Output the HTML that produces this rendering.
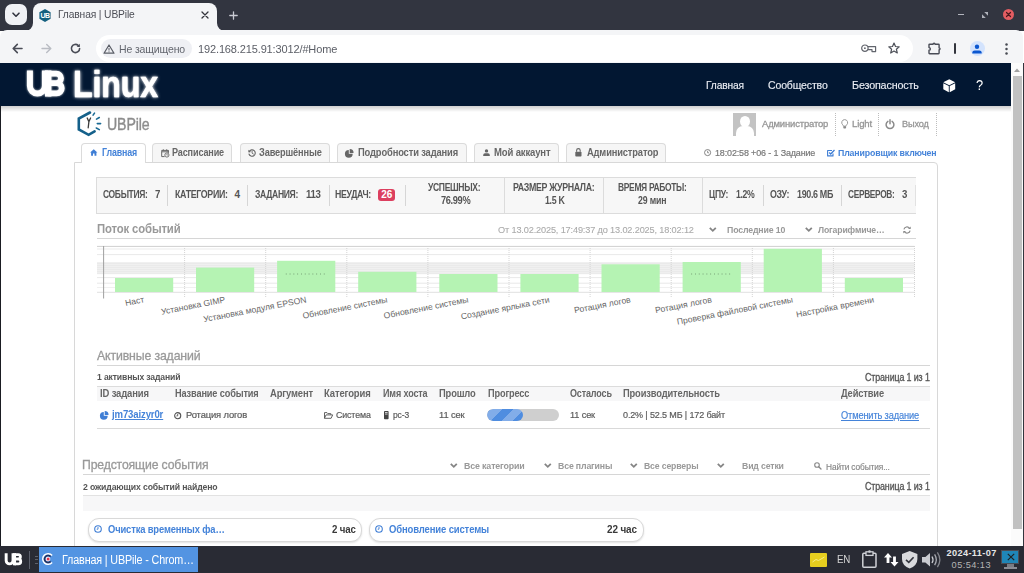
<!DOCTYPE html>
<html><head><meta charset="utf-8"><title>UBPile</title>
<style>
*{box-sizing:border-box;margin:0;padding:0}
html,body{width:1024px;height:573px;overflow:hidden;background:#fff;font-family:"Liberation Sans",sans-serif;}
body{position:relative}
.a{position:absolute}
.t{position:absolute;white-space:nowrap;line-height:1;display:block;transform-origin:0 50%}
svg{position:absolute;overflow:visible}
.tab{position:absolute;top:143px;height:19px;background:#f6f6f6;border:1px solid #dbdbdb;border-bottom:none;border-radius:4px 4px 0 0}
.sep{position:absolute;width:1px;background:#d6d6d6}
.vb{position:absolute;width:1px;background:#dcdcdc;top:177px;height:36px}
.card{position:absolute;top:518px;height:24px;background:#fff;border:1px solid #d9d9d9;border-radius:11px;box-shadow:0 1px 2px rgba(0,0,0,.12)}
</style></head><body>
<!-- chrome tabstrip -->
<div class="a" style="left:0;top:0;width:1024px;height:31px;background:#323540"></div>
<div class="a" style="left:5px;top:4px;width:22px;height:21px;background:#f0f1f5;border-radius:7px"></div>
<svg style="left:12px;top:12px" width="8" height="6" viewBox="0 0 8 6"><path d="M1 1.2 L4 4.2 L7 1.2" fill="none" stroke="#323540" stroke-width="1.6" stroke-linecap="round" stroke-linejoin="round"/></svg>
<!-- toolbar -->
<div class="a" style="left:0;top:30px;width:1023px;height:33px;background:#f4f5f7;border-radius:7px 7px 0 0"></div>
<!-- active tab -->
<div class="a" style="left:33px;top:3px;width:184px;height:28px;background:#f4f5f7;border-radius:8px 8px 0 0"></div>
<svg style="left:25px;top:23px" width="8" height="8" viewBox="0 0 8 8"><path d="M8 0 V8 H0 A8 8 0 0 0 8 0Z" fill="#f4f5f7"/></svg>
<svg style="left:217px;top:23px" width="8" height="8" viewBox="0 0 8 8"><path d="M0 0 V8 H8 A8 8 0 0 1 0 0Z" fill="#f4f5f7"/></svg>
<!-- favicon -->
<svg style="left:39px;top:8.5px" width="12" height="13" viewBox="0 0 12 13"><path d="M6 0 L11.6 3.2 V9.8 L6 13 L0.4 9.8 V3.2Z" fill="#15607f"/><text x="6" y="9.1" font-size="7" font-weight="bold" fill="#fff" text-anchor="middle" font-family="Liberation Sans" letter-spacing="-0.6">UB</text></svg>
<!-- tab close / plus -->
<svg style="left:200.5px;top:11px" width="8" height="8" viewBox="0 0 8 8"><path d="M1 1 L7 7 M7 1 L1 7" stroke="#33353d" stroke-width="1.3" stroke-linecap="round"/></svg>
<svg style="left:229px;top:10.5px" width="9" height="9" viewBox="0 0 9 9"><path d="M4.5 0.8 V8.2 M0.8 4.5 H8.2" stroke="#c9cbd3" stroke-width="1.3" stroke-linecap="round"/></svg>
<!-- window controls -->
<div class="a" style="left:957.5px;top:13.6px;width:6px;height:1.6px;background:#b3b5be"></div>
<svg style="left:981.5px;top:11.5px" width="6" height="6" viewBox="0 0 6 6"><path d="M2.2 0 H6 V3.8Z M0 2.2 V6 H3.8Z" fill="#aeb0b9"/></svg>
<div class="a" style="left:1002.5px;top:8.5px;width:11.5px;height:11.5px;border-radius:50%;background:#e35d62"></div>
<svg style="left:1005.7px;top:11.7px" width="5" height="5" viewBox="0 0 5 5"><path d="M0.5 0.5 L4.5 4.5 M4.5 0.5 L0.5 4.5" stroke="#4a1a1e" stroke-width="1.2" stroke-linecap="round"/></svg>
<!-- nav buttons -->
<svg style="left:12px;top:43px" width="11" height="11" viewBox="0 0 11 11"><path d="M10 5.5 H1.5 M5.3 1.4 L1.2 5.5 L5.3 9.6" fill="none" stroke="#4a4d57" stroke-width="1.6" stroke-linecap="round" stroke-linejoin="round"/></svg>
<svg style="left:41px;top:43px" width="11" height="11" viewBox="0 0 11 11"><path d="M1 5.5 H9.5 M5.7 1.4 L9.8 5.5 L5.7 9.6" fill="none" stroke="#b9bcc3" stroke-width="1.4" stroke-linecap="round" stroke-linejoin="round"/></svg>
<svg style="left:69.5px;top:43px" width="11" height="11" viewBox="0 0 11 11"><path d="M9.6 5.5 A4.1 4.1 0 1 1 8.2 2.4" fill="none" stroke="#4a4d57" stroke-width="1.6" stroke-linecap="round"/><path d="M9.9 0.8 V4 H6.7Z" fill="#4a4d57"/></svg>
<!-- omnibox -->
<div class="a" style="left:96px;top:35px;width:817px;height:26.5px;background:#fff;border-radius:13.5px"></div>
<div class="a" style="left:100.5px;top:39px;width:91px;height:19px;background:#eff0f4;border-radius:9.5px"></div>
<svg style="left:103.3px;top:43.6px" width="12" height="10" viewBox="0 0 12 10"><path d="M6 1 L11 9.2 H1Z" fill="none" stroke="#5a5d66" stroke-width="1.2" stroke-linejoin="round"/><path d="M6 4 V6.5" stroke="#5a5d66" stroke-width="1"/><circle cx="6" cy="7.8" r="0.55" fill="#5a5d66"/></svg>
<!-- key, star -->
<svg style="left:861px;top:44.4px" width="15.5" height="9" viewBox="0 0 15.5 9"><circle cx="3.9" cy="4.2" r="3.2" fill="none" stroke="#62656d" stroke-width="1.2"/><circle cx="3.9" cy="4.2" r="0.9" fill="#62656d"/><path d="M7 2.7 H14.6 V7.6 H11 V5.7 H7" fill="none" stroke="#62656d" stroke-width="1.2" stroke-linejoin="round"/></svg>
<svg style="left:888px;top:42.3px" width="12" height="12" viewBox="0 0 12 12"><path d="M6 1 L7.5 4.5 L11.2 4.8 L8.4 7.3 L9.3 11 L6 9 L2.7 11 L3.6 7.3 L0.8 4.8 L4.5 4.5Z" fill="none" stroke="#4d5058" stroke-width="1.2" stroke-linejoin="round"/></svg>
<!-- extensions, bar, profile, menu -->
<svg style="left:927.8px;top:41.6px" width="13.5" height="12.5" viewBox="0 0 13.5 12.5"><path d="M1.6 2.2 H5.1 A0.95 0.95 0 0 1 7 2.2 H10.5 Q11.1 2.2 11.1 2.8 V5.9 A0.95 0.95 0 0 1 11.1 7.8 V11.1 Q11.1 11.7 10.5 11.7 H1.6 Q1 11.7 1 11.1 V8.3 A1.35 1.35 0 0 0 1 5.6 V2.8 Q1 2.2 1.6 2.2Z" fill="none" stroke="#4a4d57" stroke-width="1.4" stroke-linejoin="round"/></svg>
<div class="a" style="left:954.4px;top:42.6px;width:2px;height:11.8px;background:#33353d;border-radius:1px"></div>
<div class="a" style="left:969.5px;top:41px;width:15.2px;height:15.2px;border-radius:50%;background:#d3e3fd"></div>
<svg style="left:972.3px;top:43.5px" width="10" height="10" viewBox="0 0 10 10"><circle cx="5" cy="2.8" r="2.2" fill="#0b57d0"/><path d="M0.3 9.3 A2.6 2.6 0 0 1 2.9 6.4 H7.1 A2.6 2.6 0 0 1 9.7 9.3 V9.6 H0.3Z" fill="#0b57d0"/></svg>
<svg style="left:1004.5px;top:42.5px" width="3" height="12" viewBox="0 0 3 12"><circle cx="1.5" cy="1.5" r="1.25" fill="#474a52"/><circle cx="1.5" cy="6" r="1.25" fill="#474a52"/><circle cx="1.5" cy="10.5" r="1.25" fill="#474a52"/></svg>

<!-- page scrollbar -->
<div class="a" style="left:1011px;top:63px;width:11.5px;height:483px;background:#fbfbfb"></div>
<div class="a" style="left:1022.5px;top:63px;width:1.5px;height:483px;background:#33353d"></div>
<div class="a" style="left:1013px;top:75.5px;width:8.7px;height:453.5px;background:#c1c1c1"></div>
<svg style="left:1014.3px;top:67.5px" width="6" height="4" viewBox="0 0 6 4"><path d="M0 4 L3 0.5 L6 4Z" fill="#a0a0a0"/></svg>
<!-- left window edge -->
<div class="a" style="left:0;top:63px;width:1px;height:483px;background:#1a1c22"></div>

<!-- site nav -->
<div class="a" style="left:1px;top:106px;width:1010px;height:6px;background:linear-gradient(rgba(0,0,0,.19),rgba(0,0,0,0))"></div>
<div class="a" style="left:0;top:63px;width:1011px;height:43px;background:#021732"></div>
<svg style="left:0;top:0;filter:drop-shadow(0 0 1.2px rgba(255,255,255,.75))" width="80" height="110" viewBox="0 0 80 110"><path d="M29.9 70.4 V86 A7.5 7.5 0 0 0 44.9 86 V70.4" fill="none" stroke="#fff" stroke-width="6"/><path d="M48.2 70.4 V96.6" fill="none" stroke="#fff" stroke-width="6.4"/><path d="M48.2 73.6 H56.3 A4.75 4.75 0 0 1 56.3 83.1 H48.2 M48.2 83.1 H56.6 A5.15 5.15 0 0 1 56.6 93.4 H48.2" fill="none" stroke="#fff" stroke-width="5.8"/></svg>
<!-- cube icon -->
<svg style="left:942.5px;top:78.5px" width="12.5" height="13.5" viewBox="0 0 12.5 13.5"><path d="M6.25 0.3 L12.2 3.3 L6.25 6.3 L0.3 3.3Z" fill="#fff"/><path d="M0.3 4.2 L5.8 7 V13.2 L0.3 10.2Z" fill="#fff"/><path d="M12.2 4.2 L6.7 7 V13.2 L12.2 10.2Z" fill="#fff"/></svg>

<!-- UBPile logo -->
<svg style="left:77px;top:111px" width="25" height="26" viewBox="0 0 25 26"><path d="M13 1.5 L1.8 7.6 V18.4 L11.6 23.8 L17.6 20.3" fill="none" stroke="#14608a" stroke-width="2.6" stroke-linejoin="miter" stroke-linecap="round"/><path d="M10.2 7 L11.9 10.6 L13.6 7 M11.9 10.6 L11.2 16.8" fill="none" stroke="#3c3c3c" stroke-width="1.3" stroke-linecap="round" stroke-linejoin="round"/><path d="M16.1 4.1 L17.5 2.1 M19.5 8.1 L22.3 6.5 M20.3 12.6 L23.6 12.6 M19.3 17 L22.3 18.6" stroke="#1a6a94" stroke-width="1.6" stroke-linecap="round"/></svg>

<!-- header right -->
<div class="a" style="left:733px;top:112.5px;width:23px;height:23.3px;background:#c3c3c3;overflow:hidden"><div class="a" style="left:6.5px;top:3.5px;width:10px;height:11px;border-radius:50%;background:#fff"></div><div class="a" style="left:2.5px;top:13px;width:18px;height:16px;border-radius:7px 7px 0 0;background:#fff"></div></div>
<div class="a" style="left:835.2px;top:112.5px;height:23px;width:0;border-left:1px dotted #bdbdbd"></div>
<div class="a" style="left:878px;top:112.5px;height:23px;width:0;border-left:1px dotted #bdbdbd"></div>
<div class="a" style="left:936.2px;top:112.5px;height:23px;width:0;border-left:1px dotted #bdbdbd"></div>
<svg style="left:841px;top:119.3px" width="7.4" height="10" viewBox="0 0 7.4 10"><path d="M3.7 0.6 A3 3 0 0 1 5.7 5.8 Q5.1 6.4 5.1 7.2 H2.3 Q2.3 6.4 1.7 5.8 A3 3 0 0 1 3.7 0.6Z" fill="none" stroke="#999" stroke-width="1"/><rect x="2.3" y="7.3" width="2.8" height="2.2" rx="0.8" fill="#8a8a8a"/></svg>
<svg style="left:885px;top:119px" width="10" height="10" viewBox="0 0 10 10"><path d="M2.9 2.3 A3.9 3.9 0 1 0 7.1 2.3" fill="none" stroke="#8a8a8a" stroke-width="1.5" stroke-linecap="round"/><path d="M5 0.7 V4.8" stroke="#8a8a8a" stroke-width="1.5" stroke-linecap="round"/></svg>

<!-- main panel -->
<div class="a" style="left:74px;top:161.5px;width:864px;height:400px;border:1px solid #d8d8d8;border-radius:0 4px 0 0;background:#fff"></div>
<!-- tabs -->
<div class="tab" style="left:80.6px;width:65px;background:#fff;height:20px"></div>
<div class="tab" style="left:151.8px;width:80.7px"></div>
<div class="tab" style="left:239.8px;width:90.2px"></div>
<div class="tab" style="left:336.8px;width:129.8px"></div>
<div class="tab" style="left:473.5px;width:85.5px"></div>
<div class="tab" style="left:566px;width:100px"></div>
<!-- tab icons -->
<svg style="left:90px;top:149px" width="7.5" height="7" viewBox="0 0 7.5 7"><path d="M3.75 0.2 L7.4 3.5 H6.4 V6.8 H4.5 V4.6 H3 V6.8 H1.1 V3.5 H0.1Z" fill="#3f7ed5"/></svg>
<svg style="left:161px;top:148.5px" width="8.5" height="8.5" viewBox="0 0 8.5 8.5"><path d="M0.7 1.4 H7.3 V4 M7.3 1.4 V2.8 H0.7 V1.4 M0.7 2.8 V7.6 H3.6" fill="none" stroke="#666" stroke-width="1"/><path d="M2.3 0.3 V1.8 M5.7 0.3 V1.8" stroke="#666" stroke-width="1"/><circle cx="5.9" cy="6" r="2.1" fill="none" stroke="#666" stroke-width="0.9"/><path d="M5.9 4.9 V6.1 H6.8" fill="none" stroke="#666" stroke-width="0.7"/></svg>
<svg style="left:247.8px;top:148.8px" width="8" height="8" viewBox="0 0 8 8"><path d="M1.2 2.6 A3.2 3.2 0 1 1 1 5" fill="none" stroke="#666" stroke-width="1.1" stroke-linecap="round"/><path d="M0.2 0.8 L0.6 3.4 L3.1 2.9Z" fill="#666"/><path d="M4.1 2.4 V4.2 L5.4 5" fill="none" stroke="#666" stroke-width="0.9" stroke-linecap="round"/></svg>
<svg style="left:345.3px;top:148.6px" width="8.6" height="8.6" viewBox="0 0 8.6 8.6"><path d="M3.8 0.9 V4.8 H7.7 A3.9 3.9 0 1 1 3.8 0.9Z" fill="#666"/><path d="M4.7 0 A3.9 3.9 0 0 1 8.6 3.9 H4.7Z" fill="#666"/></svg>
<svg style="left:483px;top:149.3px" width="7" height="7" viewBox="0 0 7 7"><circle cx="3.5" cy="1.9" r="1.7" fill="#666"/><path d="M0.2 6.9 V6 A1.8 1.8 0 0 1 2 4.3 H5 A1.8 1.8 0 0 1 6.8 6 V6.9Z" fill="#666"/></svg>
<svg style="left:575.3px;top:148.3px" width="6.8" height="8.6" viewBox="0 0 6.8 8.6"><path d="M1.6 3.8 V2.4 A1.8 1.8 0 0 1 5.2 2.4 V3.8" fill="none" stroke="#666" stroke-width="1.1"/><rect x="0.3" y="3.7" width="6.2" height="4.7" rx="0.7" fill="#666"/></svg>
<svg style="left:704.2px;top:149.2px" width="7.2" height="7.2" viewBox="0 0 7.2 7.2"><circle cx="3.6" cy="3.6" r="3.05" fill="none" stroke="#777" stroke-width="0.9"/><path d="M3.6 1.8 V3.8 H5" fill="none" stroke="#777" stroke-width="0.8"/></svg>
<svg style="left:827.2px;top:148.8px" width="8" height="7.6" viewBox="0 0 8 7.6"><path d="M6 4.6 V6.9 H0.6 V1.5 H5" fill="none" stroke="#3f7ed5" stroke-width="1.1" stroke-linejoin="round"/><path d="M2.2 3.5 L3.7 5 L7.5 1" fill="none" stroke="#3f7ed5" stroke-width="1.3"/></svg>

<!-- stats bar -->
<div class="a" style="left:96px;top:176.5px;width:819.5px;height:37px;background:#f7f7f7;border:1px solid #dcdcdc;border-right:none"></div>
<div class="sep" style="left:167.3px;top:185px;height:20.5px"></div>
<div class="sep" style="left:247.4px;top:185px;height:20.5px"></div>
<div class="sep" style="left:328.5px;top:185px;height:20.5px"></div>
<div class="sep" style="left:405.3px;top:185px;height:20.5px"></div>
<div class="vb" style="left:504.3px"></div>
<div class="vb" style="left:603px"></div>
<div class="vb" style="left:702px"></div>
<div class="sep" style="left:763px;top:185px;height:20.5px"></div>
<div class="sep" style="left:841px;top:185px;height:20.5px"></div>
<div class="sep" style="left:914.5px;top:185px;height:20.5px;background:#e2e2e2"></div>
<div class="a" style="left:378px;top:188.6px;width:17.2px;height:12.6px;background:#dc3f5f;border-radius:3px"></div>

<!-- section 1 header -->
<div class="a" style="left:97px;top:237.7px;width:818.5px;height:1px;background:#d6d6d6"></div>
<svg style="left:708.7px;top:226.8px" width="7.6" height="5" viewBox="0 0 7.6 5"><path d="M0.8 0.8 L3.8 3.8 L6.8 0.8" fill="none" stroke="#858585" stroke-width="1.8"/></svg>
<svg style="left:805px;top:226.8px" width="7.6" height="5" viewBox="0 0 7.6 5"><path d="M0.8 0.8 L3.8 3.8 L6.8 0.8" fill="none" stroke="#858585" stroke-width="1.8"/></svg>
<svg style="left:903px;top:225.5px" width="8" height="8" viewBox="0 0 8 8"><path d="M0.9 3.4 A3.1 3.1 0 0 1 6.5 2.2 M7.1 4.6 A3.1 3.1 0 0 1 1.5 5.8" fill="none" stroke="#888" stroke-width="1.1"/><path d="M7.7 0.4 V3.1 H5Z M0.3 7.6 V4.9 H3Z" fill="#888"/></svg>

<svg style="left:0;top:0" width="1024" height="573" viewBox="0 0 1024 573">
<rect x="97.0" y="262" width="817.5" height="12.2" fill="#f0f0f0"/>
<rect x="97.0" y="263.1" width="817.5" height="0.8" fill="#e9e9e9"/>
<rect x="97.0" y="265.1" width="817.5" height="0.8" fill="#e9e9e9"/>
<rect x="97.0" y="267.1" width="817.5" height="0.8" fill="#e9e9e9"/>
<rect x="97.0" y="269.1" width="817.5" height="0.8" fill="#e9e9e9"/>
<rect x="97.0" y="271.1" width="817.5" height="0.8" fill="#e9e9e9"/>
<rect x="97.0" y="272.90000000000003" width="817.5" height="0.8" fill="#e9e9e9"/>
<rect x="97.0" y="245.9" width="817.5" height="1" fill="#d0d0d0"/>
<rect x="97.0" y="248.5" width="817.5" height="1" fill="#ececec"/>
<rect x="97.0" y="254.1" width="817.5" height="1" fill="#e9e9e9"/>
<rect x="97.0" y="277.1" width="817.5" height="1" fill="#e9e9e9"/>
<rect x="97.0" y="282.7" width="817.5" height="1" fill="#e9e9e9"/>
<rect x="97.0" y="287.0" width="817.5" height="1" fill="#f0f0f0"/>
<rect x="97.0" y="291.8" width="817.5" height="1" fill="#e0e0e0"/>
<line x1="184.6" y1="246" x2="184.6" y2="298" stroke="#d4d4d4" stroke-width="1" stroke-dasharray="1 1"/>
<line x1="265.7" y1="246" x2="265.7" y2="298" stroke="#d4d4d4" stroke-width="1" stroke-dasharray="1 1"/>
<line x1="346.8" y1="246" x2="346.8" y2="298" stroke="#d4d4d4" stroke-width="1" stroke-dasharray="1 1"/>
<line x1="427.9" y1="246" x2="427.9" y2="298" stroke="#d4d4d4" stroke-width="1" stroke-dasharray="1 1"/>
<line x1="509.0" y1="246" x2="509.0" y2="298" stroke="#d4d4d4" stroke-width="1" stroke-dasharray="1 1"/>
<line x1="590.1" y1="246" x2="590.1" y2="298" stroke="#d4d4d4" stroke-width="1" stroke-dasharray="1 1"/>
<line x1="671.2" y1="246" x2="671.2" y2="298" stroke="#d4d4d4" stroke-width="1" stroke-dasharray="1 1"/>
<line x1="752.3" y1="246" x2="752.3" y2="298" stroke="#d4d4d4" stroke-width="1" stroke-dasharray="1 1"/>
<line x1="833.4" y1="246" x2="833.4" y2="298" stroke="#d4d4d4" stroke-width="1" stroke-dasharray="1 1"/>
<line x1="914.5" y1="246" x2="914.5" y2="298" stroke="#d4d4d4" stroke-width="1" stroke-dasharray="1 1"/>
<rect x="103.1" y="246" width="1" height="52.5" fill="#a0a0a0"/>
<rect x="115.0" y="278" width="58.2" height="14.0" fill="#b5f3b3"/>
<text x="144.6" y="302.3" font-size="8.6" fill="#666" text-anchor="end" font-family="Liberation Sans" transform="rotate(-11 144.6 302.3)">Наст</text>
<rect x="196.0" y="267.6" width="58.2" height="24.4" fill="#b5f3b3"/>
<text x="225.6" y="302.3" font-size="8.6" fill="#666" text-anchor="end" font-family="Liberation Sans" transform="rotate(-11 225.6 302.3)">Установка GIMP</text>
<rect x="277.1" y="260.8" width="58.2" height="31.2" fill="#b5f3b3"/>
<text x="306.8" y="302.3" font-size="8.6" fill="#666" text-anchor="end" font-family="Liberation Sans" transform="rotate(-11 306.8 302.3)">Установка модуля EPSON</text>
<rect x="358.2" y="271.8" width="58.2" height="20.2" fill="#b5f3b3"/>
<text x="387.8" y="302.3" font-size="8.6" fill="#666" text-anchor="end" font-family="Liberation Sans" transform="rotate(-11 387.8 302.3)">Обновление системы</text>
<rect x="439.3" y="274" width="58.2" height="18.0" fill="#b5f3b3"/>
<text x="468.9" y="302.3" font-size="8.6" fill="#666" text-anchor="end" font-family="Liberation Sans" transform="rotate(-11 468.9 302.3)">Обновление системы</text>
<rect x="520.4" y="274" width="58.2" height="18.0" fill="#b5f3b3"/>
<text x="550.0" y="302.3" font-size="8.6" fill="#666" text-anchor="end" font-family="Liberation Sans" transform="rotate(-11 550.0 302.3)">Создание ярлыка сети</text>
<rect x="601.5" y="264.3" width="58.2" height="27.7" fill="#b5f3b3"/>
<text x="631.1" y="302.3" font-size="8.6" fill="#666" text-anchor="end" font-family="Liberation Sans" transform="rotate(-11 631.1 302.3)">Ротация логов</text>
<rect x="682.6" y="262" width="58.2" height="30.0" fill="#b5f3b3"/>
<text x="712.2" y="302.3" font-size="8.6" fill="#666" text-anchor="end" font-family="Liberation Sans" transform="rotate(-11 712.2 302.3)">Ротация логов</text>
<rect x="763.7" y="248.8" width="58.2" height="43.2" fill="#b5f3b3"/>
<text x="793.3" y="302.3" font-size="8.6" fill="#666" text-anchor="end" font-family="Liberation Sans" transform="rotate(-11 793.3 302.3)">Проверка файловой системы</text>
<rect x="844.8" y="278" width="58.2" height="14.0" fill="#b5f3b3"/>
<text x="874.4" y="302.3" font-size="8.6" fill="#666" text-anchor="end" font-family="Liberation Sans" transform="rotate(-11 874.4 302.3)">Настройка времени</text>
<line x1="285.8" y1="274" x2="327.2" y2="274" stroke="#6a8f6a" stroke-width="0.9" stroke-dasharray="0.9 2.9"/>
<line x1="691.2" y1="274" x2="732.8" y2="274" stroke="#6a8f6a" stroke-width="0.9" stroke-dasharray="0.9 2.9"/>
</svg>

<!-- section 2 -->
<div class="a" style="left:97px;top:364.7px;width:832.5px;height:1px;background:#d6d6d6"></div>
<div class="a" style="left:97px;top:385.7px;width:832.5px;height:15.5px;background:#f7f7f8;border-top:1px solid #dcdcdc"></div>
<div class="a" style="left:97px;top:427.6px;width:832.5px;height:1px;background:#d9d9d9"></div>
<svg style="left:100px;top:410.8px" width="8.6" height="8.6" viewBox="0 0 8.6 8.6"><path d="M3.8 0.9 V4.8 H7.7 A3.9 3.9 0 1 1 3.8 0.9Z" fill="#3f7ed5"/><path d="M4.7 0 A3.9 3.9 0 0 1 8.6 3.9 H4.7Z" fill="#3f7ed5"/></svg>
<svg style="left:174px;top:411.5px" width="7.4" height="7.4" viewBox="0 0 7.4 7.4"><circle cx="3.7" cy="3.7" r="3.05" fill="none" stroke="#555" stroke-width="1.1"/><path d="M3.7 1.9 V3.9 H2.4" fill="none" stroke="#555" stroke-width="0.9"/></svg>
<svg style="left:323.7px;top:411.6px" width="9" height="7" viewBox="0 0 9 7"><path d="M0.5 6.3 V0.6 H3 L3.8 1.6 H6.8 V2.8 M0.5 6.3 L2 2.9 H8.7 L7.1 6.3Z" fill="none" stroke="#555" stroke-width="0.9" stroke-linejoin="round"/></svg>
<svg style="left:383.8px;top:410.8px" width="4.6" height="8.2" viewBox="0 0 4.6 8.2"><rect x="0" y="0" width="4.6" height="8.2" rx="0.8" fill="#444"/><rect x="1" y="1" width="2.6" height="0.9" fill="#ddd"/><rect x="1" y="2.6" width="2.6" height="0.9" fill="#ddd"/></svg>
<!-- progress -->
<div class="a" style="left:487px;top:408.7px;width:72px;height:12.6px;border-radius:6.3px;background:#cfcfcf;overflow:hidden"><div class="a" style="left:0;top:0;width:36px;height:12.6px;border-radius:6.3px;background:repeating-linear-gradient(135deg,#4f8de0 0,#4f8de0 3px,#82ade9 3px,#82ade9 11px,#4f8de0 11px,#4f8de0 15.6px)"></div></div>

<!-- section 3 -->
<div class="a" style="left:82.5px;top:473.7px;width:847px;height:1px;background:#d6d6d6"></div>
<div class="a" style="left:82.5px;top:495px;width:847px;height:15.7px;background:#f7f7f8;border-top:1px solid #e2e2e2"></div>
<svg style="left:450px;top:463.2px" width="7.6" height="5" viewBox="0 0 7.6 5"><path d="M0.8 0.8 L3.8 3.8 L6.8 0.8" fill="none" stroke="#858585" stroke-width="1.8"/></svg>
<svg style="left:543.7px;top:463.2px" width="7.6" height="5" viewBox="0 0 7.6 5"><path d="M0.8 0.8 L3.8 3.8 L6.8 0.8" fill="none" stroke="#858585" stroke-width="1.8"/></svg>
<svg style="left:630px;top:463.2px" width="7.6" height="5" viewBox="0 0 7.6 5"><path d="M0.8 0.8 L3.8 3.8 L6.8 0.8" fill="none" stroke="#858585" stroke-width="1.8"/></svg>
<svg style="left:716.7px;top:463.2px" width="7.6" height="5" viewBox="0 0 7.6 5"><path d="M0.8 0.8 L3.8 3.8 L6.8 0.8" fill="none" stroke="#858585" stroke-width="1.8"/></svg>
<svg style="left:813.7px;top:462px" width="7.5" height="7.5" viewBox="0 0 7.5 7.5"><circle cx="3" cy="3" r="2.3" fill="none" stroke="#888" stroke-width="1.1"/><path d="M4.7 4.7 L7 7" stroke="#888" stroke-width="1.3" stroke-linecap="round"/></svg>
<div class="card" style="left:88px;width:273.5px"></div>
<div class="card" style="left:368.7px;width:275.3px"></div>
<svg style="left:94px;top:525.3px" width="8" height="8" viewBox="0 0 8 8"><circle cx="4" cy="4" r="3.3" fill="none" stroke="#3f7ed5" stroke-width="1.1"/><path d="M4 2 V4.2 H2.7" fill="none" stroke="#3f7ed5" stroke-width="0.9"/></svg>
<svg style="left:375.3px;top:525.3px" width="8" height="8" viewBox="0 0 8 8"><circle cx="4" cy="4" r="3.3" fill="none" stroke="#3f7ed5" stroke-width="1.1"/><path d="M4 2 V4.2 H2.7" fill="none" stroke="#3f7ed5" stroke-width="0.9"/></svg>

<!-- taskbar -->
<div class="a" style="left:0;top:546px;width:1024px;height:27px;background:#292b34"></div>
<div class="a" style="left:38.8px;top:546.7px;width:159.5px;height:25.3px;background:#5394e2"></div>
<svg style="left:0;top:0" width="40" height="573" viewBox="0 0 40 573"><g transform="translate(-7.5 520.5) scale(0.457 0.464)"><path d="M29.9 70.4 V86 A7.5 7.5 0 0 0 44.9 86 V70.4" fill="none" stroke="#fff" stroke-width="6.4"/><path d="M48.2 70.4 V96.6" fill="none" stroke="#fff" stroke-width="6.6"/><path d="M48.2 73.6 H56.3 A4.75 4.75 0 0 1 56.3 83.1 H48.2 M48.2 83.1 H56.6 A5.15 5.15 0 0 1 56.6 93.4 H48.2" fill="none" stroke="#fff" stroke-width="6.2"/></g></svg>
<div class="a" style="left:29px;top:550.5px;width:1px;height:18.5px;background:#5d616d"></div>
<div class="a" style="left:34.5px;top:555.5px;width:3px;height:1px;background:#5f626c"></div>
<div class="a" style="left:34.5px;top:559px;width:3px;height:1px;background:#5f626c"></div>
<div class="a" style="left:34.5px;top:562.5px;width:3px;height:1px;background:#5f626c"></div>
<svg style="left:42px;top:553.3px" width="12" height="12" viewBox="0 0 12 12"><path d="M10.1 2.6 A5.3 5.3 0 1 0 10.1 9.4" fill="none" stroke="#fff" stroke-width="1.5"/><path d="M8.6 3.6 A3.5 3.5 0 1 0 8.6 8.4" fill="none" stroke="#27305a" stroke-width="1.6"/><circle cx="6" cy="6" r="2.3" fill="#fff"/><circle cx="6.1" cy="6" r="1.5" fill="#e8324a"/></svg>
<!-- tray -->
<div class="a" style="left:810.3px;top:552.5px;width:16.4px;height:14px;background:#e6ce1f;border-radius:1px"></div>
<svg style="left:812px;top:556px" width="13" height="7" viewBox="0 0 13 7"><path d="M0.5 6 L4 3.5 L6.5 4.5 L12.5 1" fill="none" stroke="#f6ec8a" stroke-width="1"/></svg>
<svg style="left:862px;top:550px" width="15" height="18" viewBox="0 0 15 18"><rect x="0.8" y="3.2" width="13.2" height="14" rx="1" fill="none" stroke="#cfd1d6" stroke-width="1.5"/><rect x="4" y="1.8" width="7" height="3.6" fill="#292b34" stroke="#cfd1d6" stroke-width="1.3"/><circle cx="7.5" cy="1.5" r="1.3" fill="#cfd1d6"/></svg>
<svg style="left:883.5px;top:553px" width="14.5" height="13.5" viewBox="0 0 14.5 13.5"><path d="M4 0 L8 4.6 H5.4 V10 H2.6 V4.6 H0Z" fill="#fff"/><path d="M10.5 13.5 L14.5 8.9 H11.9 V3.5 H9.1 V8.9 H6.5Z" fill="#fff"/></svg>
<svg style="left:902.3px;top:550.5px" width="15.4" height="17.6" viewBox="0 0 15.4 17.6"><path d="M7.7 0 L15.4 3 V8 Q15.4 14.5 7.7 17.6 Q0 14.5 0 8 V3Z" fill="#d9dadd"/><path d="M4 8.8 L6.8 11.4 L11.6 6.2" fill="none" stroke="#33353d" stroke-width="1.6"/></svg>
<svg style="left:922.3px;top:550.5px" width="19.5" height="17.5" viewBox="0 0 19.5 17.5"><path d="M0 6 H3.4 L8 2 V15.5 L3.4 11.5 H0Z" fill="#c9cbd0"/><path d="M10 5.5 Q12 8.75 10 12" fill="none" stroke="#c9cbd0" stroke-width="1.3"/><path d="M12.6 3.4 Q16 8.75 12.6 14.1" fill="none" stroke="#a9abb2" stroke-width="1.3"/><path d="M15.4 1.4 Q20.3 8.75 15.4 16.1" fill="none" stroke="#83858c" stroke-width="1.3"/></svg>
<div class="a" style="left:1000.8px;top:549.5px;width:18.7px;height:14.5px;background:#1f86b8;border:1.5px solid #4a4d56"></div>
<svg style="left:1006.5px;top:553px" width="8" height="8" viewBox="0 0 8 8"><path d="M0.8 0.8 L7.2 7.2 M7.2 0.8 L0.8 7.2" stroke="#222" stroke-width="1.2"/></svg>
<div class="a" style="left:1007px;top:564px;width:6.5px;height:3px;background:#7a7c84"></div>
<div class="a" style="left:1004px;top:567px;width:12.5px;height:2px;background:#8a8c94"></div>

<span class="t" id="t0" style="left:57.80px;top:9.41px;font-size:11.4px;color:#4c4e56;letter-spacing:-0.150px;transform:scaleX(0.9016);">Главная | UBPile</span>
<span class="t" id="t1" style="left:119.00px;top:43.81px;font-size:11.2px;color:#63666e;letter-spacing:-0.150px;transform:scaleX(0.9392);">Не защищено</span>
<span class="t" id="t2" style="left:197.80px;top:43.80px;font-size:11.8px;color:#5b5e66;letter-spacing:-0.150px;transform:scaleX(0.9336);">192.168.215.91:3012/#Home</span>
<span class="t" id="t3" style="left:73.20px;top:66.51px;font-size:36px;color:#fff;letter-spacing:-0.150px;transform:scaleX(0.8924);font-weight:bold;text-shadow:0 0 2px #fff,0 0 4px rgba(255,255,255,.75),0 0 6px rgba(255,255,255,.3);-webkit-text-stroke:0.5px #fff;">Linux</span>
<span class="t" id="t4" style="left:706.00px;top:79.81px;font-size:11px;color:#e9ecf3;letter-spacing:-0.150px;transform:scaleX(0.9308);-webkit-text-stroke:0.15px #e9ecf3;">Главная</span>
<span class="t" id="t5" style="left:768.40px;top:79.81px;font-size:11px;color:#e9ecf3;letter-spacing:-0.150px;transform:scaleX(0.9550);-webkit-text-stroke:0.15px #e9ecf3;">Сообщество</span>
<span class="t" id="t6" style="left:852.30px;top:79.81px;font-size:11px;color:#e9ecf3;letter-spacing:-0.150px;transform:scaleX(0.9755);-webkit-text-stroke:0.15px #e9ecf3;">Безопасность</span>
<span class="t" id="t7" style="left:976.00px;top:78.02px;font-size:14.5px;color:#ffffff;letter-spacing:-0.150px;transform:scaleX(0.8829);">?</span>
<span class="t" id="t8" style="left:107.00px;top:116.51px;font-size:15.8px;color:#8c8c8c;letter-spacing:-0.150px;transform:scaleX(0.8967);-webkit-text-stroke:0.35px #8c8c8c;">UBPile</span>
<span class="t" id="t9" style="left:761.80px;top:119.41px;font-size:9.8px;color:#959595;letter-spacing:-0.150px;transform:scaleX(0.9631);-webkit-text-stroke:0.3px #959595;">Администратор</span>
<span class="t" id="t10" style="left:851.80px;top:119.41px;font-size:9.8px;color:#959595;letter-spacing:-0.150px;transform:scaleX(0.9756);-webkit-text-stroke:0.3px #959595;">Light</span>
<span class="t" id="t11" style="left:901.80px;top:119.41px;font-size:9.8px;color:#959595;letter-spacing:-0.150px;transform:scaleX(0.9343);-webkit-text-stroke:0.3px #959595;">Выход</span>
<span class="t" id="t12" style="left:101.60px;top:148.11px;font-size:10px;color:#4483d9;letter-spacing:-0.150px;transform:scaleX(0.8859);font-weight:bold;">Главная</span>
<span class="t" id="t13" style="left:172.00px;top:148.11px;font-size:10px;color:#676767;letter-spacing:-0.150px;transform:scaleX(0.9068);font-weight:bold;">Расписание</span>
<span class="t" id="t14" style="left:258.80px;top:148.11px;font-size:10px;color:#676767;letter-spacing:-0.150px;transform:scaleX(0.9228);font-weight:bold;">Завершённые</span>
<span class="t" id="t15" style="left:358.00px;top:148.11px;font-size:10px;color:#676767;letter-spacing:-0.150px;transform:scaleX(0.9364);font-weight:bold;">Подробности задания</span>
<span class="t" id="t16" style="left:494.00px;top:148.11px;font-size:10px;color:#676767;letter-spacing:-0.150px;transform:scaleX(0.9520);font-weight:bold;">Мой аккаунт</span>
<span class="t" id="t17" style="left:586.50px;top:148.11px;font-size:10px;color:#676767;letter-spacing:-0.150px;transform:scaleX(0.9324);font-weight:bold;">Администратор</span>
<span class="t" id="t18" style="left:714.60px;top:147.60px;font-size:9.8px;color:#777;letter-spacing:-0.150px;transform:scaleX(0.9141);-webkit-text-stroke:0.2px #777;">18:02:58 +06 - 1 Задание</span>
<span class="t" id="t19" style="left:838.00px;top:147.60px;font-size:9.8px;color:#4483d9;letter-spacing:-0.150px;transform:scaleX(0.8953);font-weight:bold;">Планировщик включен</span>
<span class="t" id="t20" style="left:103.00px;top:189.71px;font-size:10px;color:#555;letter-spacing:-0.380px;transform:scaleX(0.8475);font-weight:bold;">СОБЫТИЯ:</span>
<span class="t" id="t21" style="left:155.00px;top:189.71px;font-size:10px;color:#555;letter-spacing:-0.380px;transform:scaleX(0.9648);font-weight:bold;">7</span>
<span class="t" id="t22" style="left:174.50px;top:189.71px;font-size:10px;color:#555;letter-spacing:-0.380px;transform:scaleX(0.8824);font-weight:bold;">КАТЕГОРИИ:</span>
<span class="t" id="t23" style="left:234.50px;top:189.71px;font-size:10px;color:#555;letter-spacing:-0.062px;font-weight:bold;">4</span>
<span class="t" id="t24" style="left:254.50px;top:189.71px;font-size:10px;color:#555;letter-spacing:-0.380px;transform:scaleX(0.8583);font-weight:bold;">ЗАДАНИЯ:</span>
<span class="t" id="t25" style="left:305.50px;top:189.71px;font-size:10px;color:#555;letter-spacing:-0.380px;transform:scaleX(0.9666);font-weight:bold;">113</span>
<span class="t" id="t26" style="left:335.00px;top:189.71px;font-size:10px;color:#555;letter-spacing:-0.380px;transform:scaleX(0.8756);font-weight:bold;">НЕУДАЧ:</span>
<span class="t" id="t27" style="left:381.30px;top:190.00px;font-size:10px;color:#fff;letter-spacing:-0.213px;font-weight:bold;">26</span>
<span class="t" id="t28" style="left:427.80px;top:182.80px;font-size:10px;color:#555;letter-spacing:-0.380px;transform:scaleX(0.8564);font-weight:bold;">УСПЕШНЫХ:</span>
<span class="t" id="t29" style="left:440.50px;top:196.30px;font-size:10px;color:#555;letter-spacing:-0.380px;transform:scaleX(0.9260);font-weight:bold;">76.99%</span>
<span class="t" id="t30" style="left:512.50px;top:182.80px;font-size:10px;color:#555;letter-spacing:-0.380px;transform:scaleX(0.8804);font-weight:bold;">РАЗМЕР ЖУРНАЛА:</span>
<span class="t" id="t31" style="left:544.50px;top:196.30px;font-size:10px;color:#555;letter-spacing:-0.380px;transform:scaleX(0.8861);font-weight:bold;">1.5 K</span>
<span class="t" id="t32" style="left:617.50px;top:182.80px;font-size:10px;color:#555;letter-spacing:-0.380px;transform:scaleX(0.8442);font-weight:bold;">ВРЕМЯ РАБОТЫ:</span>
<span class="t" id="t33" style="left:637.50px;top:196.30px;font-size:10px;color:#555;letter-spacing:-0.150px;transform:scaleX(0.8742);font-weight:bold;">29 мин</span>
<span class="t" id="t34" style="left:709.00px;top:189.71px;font-size:10px;color:#555;letter-spacing:-0.380px;transform:scaleX(0.8529);font-weight:bold;">ЦПУ:</span>
<span class="t" id="t35" style="left:736.00px;top:189.71px;font-size:10px;color:#555;letter-spacing:-0.380px;transform:scaleX(0.8695);font-weight:bold;">1.2%</span>
<span class="t" id="t36" style="left:770.00px;top:189.71px;font-size:10px;color:#555;letter-spacing:-0.380px;transform:scaleX(0.8858);font-weight:bold;">ОЗУ:</span>
<span class="t" id="t37" style="left:797.00px;top:189.71px;font-size:10px;color:#555;letter-spacing:-0.380px;transform:scaleX(0.8936);font-weight:bold;">190.6 МБ</span>
<span class="t" id="t38" style="left:848.00px;top:189.71px;font-size:10px;color:#555;letter-spacing:-0.380px;transform:scaleX(0.8317);font-weight:bold;">СЕРВЕРОВ:</span>
<span class="t" id="t39" style="left:902.00px;top:189.71px;font-size:10px;color:#555;letter-spacing:-0.380px;transform:scaleX(0.9648);font-weight:bold;">3</span>
<span class="t" id="t40" style="left:97.00px;top:223.10px;font-size:12.8px;color:#999;letter-spacing:-0.150px;transform:scaleX(0.8846);font-weight:bold;">Поток событий</span>
<span class="t" id="t41" style="left:97.00px;top:349.81px;font-size:12.6px;color:#999;letter-spacing:-0.150px;transform:scaleX(0.9781);-webkit-text-stroke:0.3px #999;">Активные заданий</span>
<span class="t" id="t42" style="left:82.40px;top:458.81px;font-size:12.6px;color:#999;letter-spacing:-0.150px;transform:scaleX(0.9704);-webkit-text-stroke:0.3px #999;">Предстоящие события</span>
<span class="t" id="t43" style="left:498.00px;top:224.60px;font-size:9.6px;color:#aaa;letter-spacing:-0.150px;transform:scaleX(0.9546);-webkit-text-stroke:0.1px #aaa;">От 13.02.2025, 17:49:37 до 13.02.2025, 18:02:12</span>
<span class="t" id="t44" style="left:726.80px;top:226.40px;font-size:9.2px;color:#999;letter-spacing:-0.150px;transform:scaleX(0.9517);font-weight:bold;">Последние 10</span>
<span class="t" id="t45" style="left:818.00px;top:226.40px;font-size:9.2px;color:#999;letter-spacing:-0.150px;transform:scaleX(0.9439);font-weight:bold;">Логарифмиче…</span>
<span class="t" id="t46" style="left:97.00px;top:372.41px;font-size:9.6px;color:#555;letter-spacing:-0.150px;transform:scaleX(0.8975);font-weight:bold;">1 активных заданий</span>
<span class="t" id="t47" style="left:864.50px;top:372.61px;font-size:10.2px;color:#555;letter-spacing:-0.150px;transform:scaleX(0.8730);-webkit-text-stroke:0.3px #555;">Страница 1 из 1</span>
<span class="t" id="t48" style="left:100.00px;top:389.11px;font-size:10px;color:#666;letter-spacing:-0.150px;transform:scaleX(0.9453);font-weight:bold;">ID задания</span>
<span class="t" id="t49" style="left:174.50px;top:389.11px;font-size:10px;color:#666;letter-spacing:-0.150px;transform:scaleX(0.9191);font-weight:bold;">Название события</span>
<span class="t" id="t50" style="left:269.50px;top:389.11px;font-size:10px;color:#666;letter-spacing:-0.150px;transform:scaleX(0.9424);font-weight:bold;">Аргумент</span>
<span class="t" id="t51" style="left:324.20px;top:389.11px;font-size:10px;color:#666;letter-spacing:-0.150px;transform:scaleX(0.9484);font-weight:bold;">Категория</span>
<span class="t" id="t52" style="left:383.00px;top:389.11px;font-size:10px;color:#666;letter-spacing:-0.150px;transform:scaleX(0.9051);font-weight:bold;">Имя хоста</span>
<span class="t" id="t53" style="left:439.20px;top:389.11px;font-size:10px;color:#666;letter-spacing:-0.150px;transform:scaleX(0.9342);font-weight:bold;">Прошло</span>
<span class="t" id="t54" style="left:487.50px;top:389.11px;font-size:10px;color:#666;letter-spacing:-0.150px;transform:scaleX(0.9171);font-weight:bold;">Прогресс</span>
<span class="t" id="t55" style="left:570.00px;top:389.11px;font-size:10px;color:#666;letter-spacing:-0.150px;transform:scaleX(0.8986);font-weight:bold;">Осталось</span>
<span class="t" id="t56" style="left:623.20px;top:389.11px;font-size:10px;color:#666;letter-spacing:-0.150px;transform:scaleX(0.9317);font-weight:bold;">Производительность</span>
<span class="t" id="t57" style="left:841.20px;top:389.11px;font-size:10px;color:#666;letter-spacing:-0.150px;transform:scaleX(0.9331);font-weight:bold;">Действие</span>
<span class="t" id="t58" style="left:111.80px;top:409.81px;font-size:10.2px;color:#4483d9;letter-spacing:-0.150px;transform:scaleX(0.9407);font-weight:bold;text-decoration:underline;text-underline-offset:1px;">jm73aizyr0r</span>
<span class="t" id="t59" style="left:186.10px;top:410.10px;font-size:9.8px;color:#5a5a5a;letter-spacing:-0.150px;transform:scaleX(0.9589);-webkit-text-stroke:0.2px #5a5a5a;">Ротация логов</span>
<span class="t" id="t60" style="left:335.80px;top:410.10px;font-size:9.8px;color:#5a5a5a;letter-spacing:-0.150px;transform:scaleX(0.9032);-webkit-text-stroke:0.2px #5a5a5a;">Система</span>
<span class="t" id="t61" style="left:393.00px;top:410.10px;font-size:9.8px;color:#5a5a5a;letter-spacing:-0.150px;transform:scaleX(0.8666);-webkit-text-stroke:0.2px #5a5a5a;">pc-3</span>
<span class="t" id="t62" style="left:439.00px;top:410.10px;font-size:9.8px;color:#5a5a5a;letter-spacing:-0.150px;transform:scaleX(0.9575);-webkit-text-stroke:0.2px #5a5a5a;">11 сек</span>
<span class="t" id="t63" style="left:570.00px;top:410.10px;font-size:9.8px;color:#5a5a5a;letter-spacing:-0.150px;transform:scaleX(0.9387);-webkit-text-stroke:0.2px #5a5a5a;">11 сек</span>
<span class="t" id="t64" style="left:623.00px;top:410.10px;font-size:9.8px;color:#5a5a5a;letter-spacing:-0.150px;transform:scaleX(0.9205);-webkit-text-stroke:0.2px #5a5a5a;">0.2% | 52.5 МБ | 172 байт</span>
<span class="t" id="t65" style="left:841.20px;top:410.61px;font-size:10px;color:#4483d9;letter-spacing:-0.150px;transform:scaleX(0.9254);text-decoration:underline;text-underline-offset:1px;-webkit-text-stroke:0.15px #4483d9;">Отменить задание</span>
<span class="t" id="t66" style="left:464.40px;top:462.01px;font-size:9.2px;color:#999;letter-spacing:-0.150px;transform:scaleX(0.9619);font-weight:bold;">Все категории</span>
<span class="t" id="t67" style="left:557.50px;top:462.01px;font-size:9.2px;color:#999;letter-spacing:-0.150px;transform:scaleX(0.9504);font-weight:bold;">Все плагины</span>
<span class="t" id="t68" style="left:643.80px;top:462.01px;font-size:9.2px;color:#999;letter-spacing:-0.150px;transform:scaleX(0.9429);font-weight:bold;">Все серверы</span>
<span class="t" id="t69" style="left:742.00px;top:462.01px;font-size:9.2px;color:#999;letter-spacing:-0.150px;transform:scaleX(0.9464);font-weight:bold;">Вид сетки</span>
<span class="t" id="t70" style="left:825.80px;top:461.60px;font-size:9.6px;color:#858585;letter-spacing:-0.150px;transform:scaleX(0.8699);-webkit-text-stroke:0.15px #858585;">Найти события...</span>
<span class="t" id="t71" style="left:82.50px;top:481.81px;font-size:9.6px;color:#555;letter-spacing:-0.150px;transform:scaleX(0.9052);font-weight:bold;">2 ожидающих событий найдено</span>
<span class="t" id="t72" style="left:864.50px;top:482.00px;font-size:10.2px;color:#555;letter-spacing:-0.150px;transform:scaleX(0.8730);-webkit-text-stroke:0.3px #555;">Страница 1 из 1</span>
<span class="t" id="t73" style="left:107.80px;top:524.81px;font-size:10.3px;color:#4483d9;letter-spacing:-0.150px;transform:scaleX(0.9110);font-weight:bold;">Очистка временных фа…</span>
<span class="t" id="t74" style="left:332.00px;top:524.81px;font-size:10.3px;color:#3a3a3a;letter-spacing:-0.150px;transform:scaleX(0.9414);font-weight:bold;">2 час</span>
<span class="t" id="t75" style="left:388.80px;top:524.81px;font-size:10.3px;color:#4483d9;letter-spacing:-0.150px;transform:scaleX(0.9219);font-weight:bold;">Обновление системы</span>
<span class="t" id="t76" style="left:607.00px;top:524.81px;font-size:10.3px;color:#3a3a3a;letter-spacing:-0.150px;transform:scaleX(0.9660);font-weight:bold;">22 час</span>
<span class="t" id="t77" style="left:62.00px;top:553.50px;font-size:12px;color:#fff;letter-spacing:-0.150px;transform:scaleX(0.8962);">Главная | UBPile - Chrom…</span>
<span class="t" id="t78" style="left:837.20px;top:554.41px;font-size:10.7px;color:#d4d4d4;letter-spacing:-0.150px;transform:scaleX(0.9135);">EN</span>
<span class="t" id="t79" style="left:946.50px;top:549.40px;font-size:9.2px;color:#e6e6e6;letter-spacing:0.370px;font-weight:bold;">2024-11-07</span>
<span class="t" id="t80" style="left:951.60px;top:561.11px;font-size:9.2px;color:#b5b5b5;letter-spacing:0.454px;">05:54:13</span>
</body></html>
